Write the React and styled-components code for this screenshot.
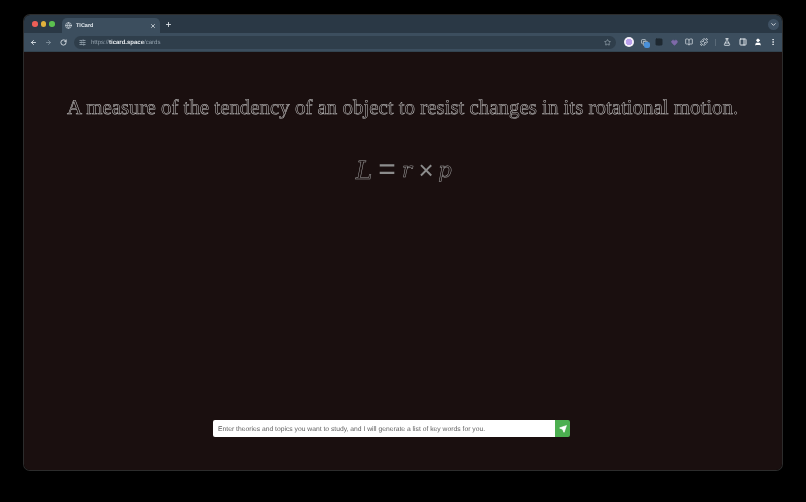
import styled, { createGlobalStyle } from 'styled-components';
import { ArrowLeft, ArrowRight, RotateCw, X, Plus, ChevronDown, Star, SlidersHorizontal, Globe, EllipsisVertical, User, FlaskConical, PanelRight, Puzzle, Send, Heart, Columns2, Copy, BookOpen } from 'lucide-react';

const Global = createGlobalStyle`
  html, body { margin: 0; padding: 0; background: #000; }
  body { font-family: "Liberation Sans", Arial, sans-serif; text-rendering: geometricPrecision; }
`

const Desktop = styled.div`
  width: 806px;
  height: 502px;
  padding: 15px 24px 32px;
  box-sizing: border-box;
  background: #000;
  overflow: hidden;
`

const Window = styled.div`
  height: 100%;
  display: flex;
  flex-direction: column;
  border-radius: 6px;
  overflow: hidden;
  box-shadow: 0 0 0 1px #2c2c2c;
`

const TabStrip = styled.div`
  height: 18px;
  flex: none;
  display: flex;
  align-items: flex-end;
  background: #2a3845;
  padding-left: 8px;
`

const Lights = styled.div`
  display: flex;
  gap: 3px;
  align-self: center;
  width: 30px;
  flex: none;
`

const Light = styled.span`
  width: 5.5px;
  height: 5.5px;
  border-radius: 50%;
  background: ${p => p.$color};
`

const Tab = styled.div`
  width: 98px;
  height: 15px;
  box-sizing: border-box;
  display: flex;
  align-items: center;
  gap: 4px;
  padding: 0 4px 0 3px;
  background: #3c4e5e;
  border-radius: 5px 5px 0 0;
  color: #dfe5ea;
  font-size: 5.5px;
  font-weight: 700;
  will-change: transform;
`

const TabTitle = styled.span`
  flex: 1;
`

const NewTab = styled.div`
  display: flex;
  align-items: center;
  align-self: center;
  margin-left: 5px;
  color: #dfe5ea;
`

const StripEnd = styled.div`
  margin-left: auto;
  margin-right: 3px;
  align-self: center;
  width: 11px;
  height: 11px;
  border-radius: 50%;
  background: #3f5163;
  color: #e3e8ec;
  display: flex;
  align-items: center;
  justify-content: center;
`

const Toolbar = styled.div`
  height: 19px;
  flex: none;
  display: flex;
  align-items: center;
  background: #3c4e5e;
  padding: 0 5px 0 6px;
  color: #dfe5ea;
  border-bottom: 1px solid #33434f;
  box-sizing: border-box;
`

const NavIcons = styled.div`
  display: flex;
  align-items: center;
  gap: 8px;
  width: 44px;
  flex: none;
`

const Faded = styled.span`
  display: flex;
  color: #80909d;
`

const Omnibox = styled.div`
  width: 542px;
  height: 13px;
  flex: none;
  display: flex;
  align-items: center;
  gap: 5px;
  padding: 0 5px;
  box-sizing: border-box;
  border-radius: 7px;
  background: #2f3e4b;
  font-size: 6px;
  color: #94a2ae;
  will-change: transform;
`

const Url = styled.span`
  flex: 1;
  b {
    color: #e4e8ec;
    font-weight: 700;
  }
`

const Extensions = styled.div`
  display: flex;
  align-items: center;
  flex: 1;
  margin-left: 8px;
  justify-content: space-between;
`

const Avatar = styled.span`
  width: 10px;
  height: 10px;
  border-radius: 50%;
  background: radial-gradient(#b9a0ec 45%, #f2eef8 50%);
`

const Badged = styled.span`
  position: relative;
  display: flex;
  color: #b9c3cc;
`

const Badge = styled.span`
  position: absolute;
  right: -2px;
  bottom: -2px;
  width: 6px;
  height: 6px;
  border-radius: 2px;
  background: #4a90d9;
`

const Tinted = styled.span`
  display: flex;
  color: ${p => p.$color};
`

const Divider = styled.span`
  width: 1px;
  height: 7px;
  background: #5a6a78;
`

const Page = styled.main`
  flex: 1;
  min-height: 0;
  display: flex;
  flex-direction: column;
  align-items: center;
  background: #1a0f0f;
`

const Definition = styled.h1`
  margin: 41px 0 0;
  font-family: "Liberation Serif", "Times New Roman", serif;
  font-size: 20.9px;
  line-height: 28px;
  font-weight: 400;
  white-space: nowrap;
  color: transparent;
  -webkit-text-stroke: 0.5px #c4c4c4;
  will-change: transform;
`

const Formula = styled.div`
  margin-top: 31px;
  display: flex;
  align-items: center;
  height: 36px;
  font-family: "DejaVu Serif", "Liberation Serif", serif;
  color: transparent;
  -webkit-text-stroke: 0.5px #a0a0a0;
  will-change: transform;
`

const Symbol = styled.i`
  width: ${p => p.$width}px;
  text-align: center;
  font-style: italic;
  font-size: ${p => p.$size}px;
`

const Operator = styled.span`
  width: ${p => p.$width}px;
  text-align: center;
  font-family: "Liberation Sans", Arial, sans-serif;
  font-size: ${p => p.$size}px;
  color: #8c8c8c;
  -webkit-text-stroke: 0;
`

const Composer = styled.form`
  margin: auto 23px 33px 0;
  width: 357px;
  height: 17px;
  display: flex;
  border-radius: 2px;
  overflow: hidden;
`

const Prompt = styled.input`
  flex: 1;
  min-width: 0;
  border: 0;
  outline: 0;
  padding: 1px 5px 0;
  background: #fff;
  font-family: "Liberation Sans", Arial, sans-serif;
  font-size: 6.75px;
  text-rendering: geometricPrecision;
  will-change: transform;
  &::placeholder {
    color: #5f5f5f;
    opacity: 1;
  }
`

const SendButton = styled.button`
  width: 15px;
  flex: none;
  padding: 0;
  border: 0;
  display: flex;
  align-items: center;
  justify-content: center;
  background: #4caf50;
  color: #fff;
`

export default function App() {
  return (
    <>
      <Global />
      <Desktop>
        <Window>
          <TabStrip>
            <Lights>
              <Light $color="#ec5f57" />
              <Light $color="#e0b03c" />
              <Light $color="#5bc04f" />
            </Lights>
            <Tab>
              <Globe size={7} />
              <TabTitle>TICard</TabTitle>
              <X size={6} strokeWidth={3} />
            </Tab>
            <NewTab><Plus size={7} strokeWidth={3} /></NewTab>
            <StripEnd><ChevronDown size={7} strokeWidth={3} /></StripEnd>
          </TabStrip>
          <Toolbar>
            <NavIcons>
              <ArrowLeft size={7} strokeWidth={3} />
              <Faded><ArrowRight size={7} strokeWidth={3} /></Faded>
              <RotateCw size={7} strokeWidth={3} />
            </NavIcons>
            <Omnibox>
              <SlidersHorizontal size={7} strokeWidth={3} />
              <Url>https://<b>ticard.space</b>/cards</Url>
              <Star size={7} strokeWidth={2.5} />
            </Omnibox>
            <Extensions>
              <Avatar />
              <Badged><Copy size={7} strokeWidth={3} /><Badge /></Badged>
              <Tinted $color="#1e2830"><Columns2 size={8} strokeWidth={3} fill="#1e2830" /></Tinted>
              <Tinted $color="#7f6aa8"><Heart size={7} fill="#7f6aa8" /></Tinted>
              <Tinted $color="#c5ced5"><BookOpen size={8} strokeWidth={2.5} /></Tinted>
              <Puzzle size={8} strokeWidth={2.5} />
              <Divider />
              <FlaskConical size={8} strokeWidth={2.5} />
              <PanelRight size={8} strokeWidth={3} />
              <User size={8} fill="#fff" color="#fff" />
              <EllipsisVertical size={8} strokeWidth={3} />
            </Extensions>
          </Toolbar>
          <Page>
            <Definition>A measure of the tendency of an object to resist changes in its rotational motion.</Definition>
            <Formula>
              <Symbol $size={25} $width={22}>L</Symbol>
              <Operator $size={30} $width={24}>=</Operator>
              <Symbol $size={21} $width={16}>r</Symbol>
              <Operator $size={26} $width={22}>×</Operator>
              <Symbol $size={21} $width={16}>p</Symbol>
            </Formula>
            <Composer onSubmit={e => e.preventDefault()}>
              <Prompt placeholder="Enter theories and topics you want to study, and I will generate a list of key words for you." />
              <SendButton type="submit"><Send size={8} fill="#fff" /></SendButton>
            </Composer>
          </Page>
        </Window>
      </Desktop>
    </>
  );
}
